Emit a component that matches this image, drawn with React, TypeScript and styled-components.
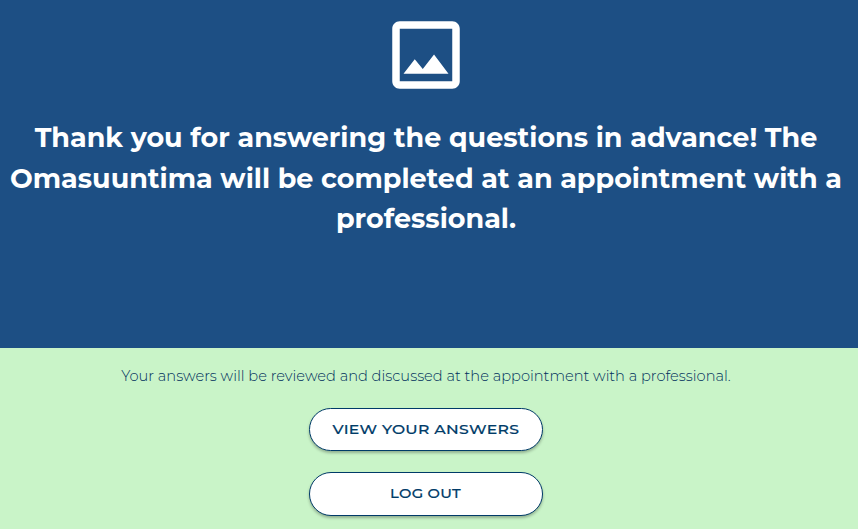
import React from "react";
import styled, { createGlobalStyle } from "styled-components";

const GlobalStyle = createGlobalStyle`
  * { box-sizing: border-box; }
  body { margin: 0; overflow: hidden; background: #c9f4c8; font-family: Montserrat, Inter, sans-serif; }
`;

const Page = styled.main`
  width: 858px;
  height: 529px;
  display: flex;
  flex-direction: column;
  background: #c9f4c8;
`;

const Hero = styled.header`
  height: 348px;
  flex: none;
  display: flex;
  flex-direction: column;
  align-items: center;
  padding: 10px 6px 0 0;
  background: #1d4f84;
  color: #fff;
`;

const PictureIcon = styled.svg`
  width: 90px;
  height: 90px;
  flex: none;
  fill: currentColor;
`;

const Title = styled.h1`
  margin: 18px 0 0;
  font-size: 27px;
  font-weight: 700;
  line-height: 40.5px;
  text-align: center;
`;

const TitleLine = styled.span`
  display: block;
  white-space: nowrap;
`;

const Content = styled.section`
  flex: 1;
  display: flex;
  flex-direction: column;
  align-items: center;
  padding: 16px 6px 0 0;
`;

const Message = styled.p`
  margin: 0;
  height: 44px;
  font-size: 14.62px;
  font-weight: 300;
  line-height: 24px;
  white-space: nowrap;
  color: #002f5c;
`;

const Actions = styled.div`
  display: grid;
  grid-template-columns: 234px;
  grid-template-rows: 43px 44px;
  row-gap: 21px;
`;

const Button = styled.button`
  display: flex;
  align-items: center;
  justify-content: center;
  padding: 0 0 2px;
  border: 1px solid #003b68;
  border-radius: 22px;
  background: #fff;
  box-shadow: 0 2px 3px rgba(0, 0, 0, 0.28);
  color: #003b68;
  font: 500 13.5px Montserrat, Inter, sans-serif;
`;

const Label = styled.span<{ $stretch: number }>`
  display: block;
  white-space: nowrap;
  line-height: 20px;
  letter-spacing: 0.3px;
  -webkit-text-stroke: 0.2px currentColor;
  transform: scaleX(${(p) => p.$stretch});
`;

export default function App() {
  return (
    <>
      <GlobalStyle />
      <Page>
        <Hero>
          <PictureIcon viewBox="0 0 24 24" aria-hidden="true">
            <path d="M19 5v14H5V5h14m0-2H5c-1.1 0-2 .9-2 2v14c0 1.1.9 2 2 2h14c1.1 0 2-.9 2-2V5c0-1.1-.9-2-2-2zm-4.86 8.86l-3 3.87L9 13.14 6 17h12l-3.86-5.14z" />
          </PictureIcon>
          <Title>
            <TitleLine>Thank you for answering the questions in advance! The</TitleLine>
            <TitleLine>Omasuuntima will be completed at an appointment with a</TitleLine>
            <TitleLine>professional.</TitleLine>
          </Title>
        </Hero>
        <Content>
          <Message>Your answers will be reviewed and discussed at the appointment with a professional.</Message>
          <Actions>
            <Button type="button"><Label $stretch={1.155}>VIEW YOUR ANSWERS</Label></Button>
            <Button type="button"><Label $stretch={1.09}>LOG OUT</Label></Button>
          </Actions>
        </Content>
      </Page>
    </>
  );
}
